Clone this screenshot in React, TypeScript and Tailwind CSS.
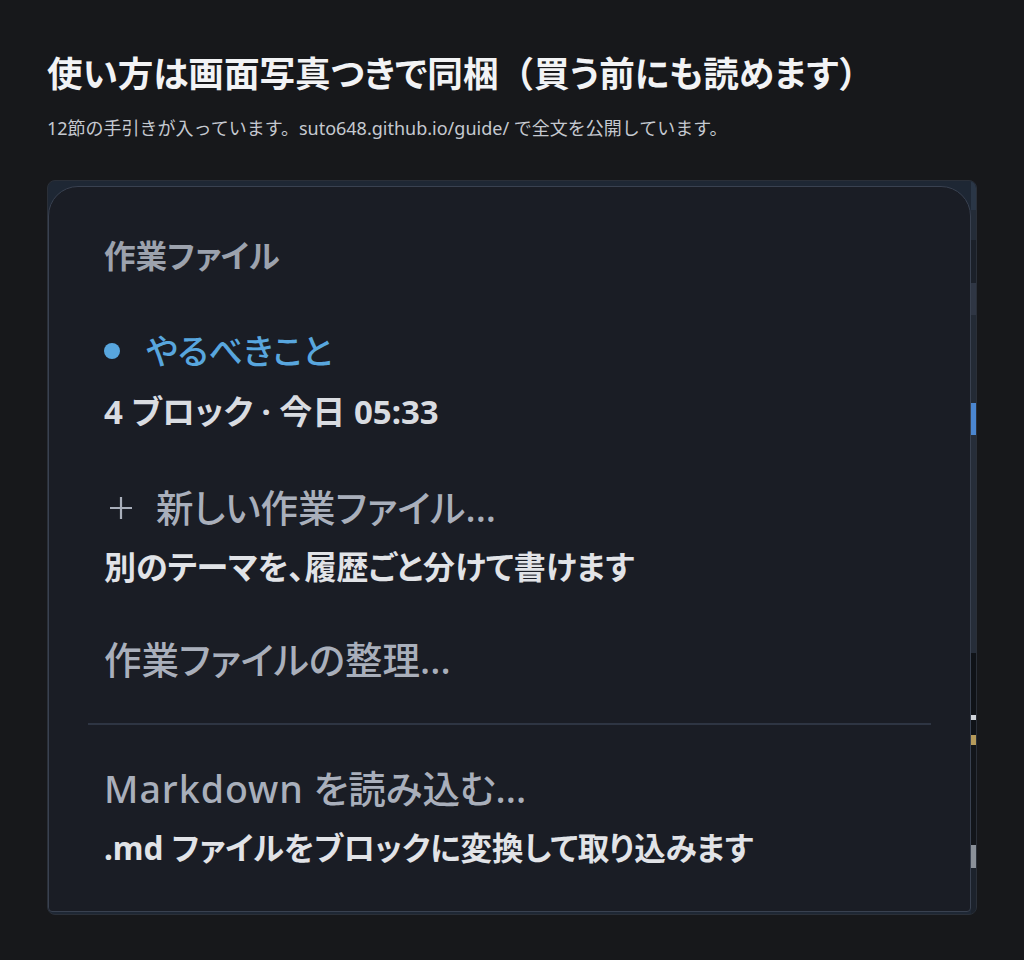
const stripSegments: { h: number; color: string }[] = [
  { h: 29, color: "bg-[#2a3646]" },
  { h: 30, color: "bg-[#242c38]" },
  { h: 43, color: "bg-[#1b2029]" },
  { h: 32, color: "bg-[#2f3644]" },
  { h: 88, color: "bg-[#232a35]" },
  { h: 32, color: "bg-[#4b86d0]" },
  { h: 218, color: "bg-[#262d39]" },
  { h: 62, color: "bg-[#0f1217]" },
  { h: 5, color: "bg-[#d0d4da]" },
  { h: 15, color: "bg-[#0f1217]" },
  { h: 10, color: "bg-[#b59a5a]" },
  { h: 100, color: "bg-[#12151a]" },
  { h: 23, color: "bg-[#8a9099]" },
];

function MenuItem({
  title,
  desc,
  lead,
  className = "",
  descClass = "text-[32px]",
}: {
  title: React.ReactNode;
  desc?: string;
  lead?: React.ReactNode;
  className?: string;
  descClass?: string;
}) {
  return (
    <div className={className}>
      <div className="flex items-center h-[44px] text-[37.5px] leading-[44px] font-medium text-[#a9afbb]">
        {lead}
        <span>{title}</span>
      </div>
      {desc && (
        <div className={`mt-[17px] h-[40px] leading-[40px] font-bold text-[#e1e3e7] ${descClass}`}>
          {desc}
        </div>
      )}
    </div>
  );
}

export default function App() {
  return (
    <div className="min-h-[960px] bg-[#17181b] px-[47px] pt-[49px] font-['Noto_Sans','Noto_Sans_CJK_JP',sans-serif] [font-feature-settings:'palt']">
      <h1 className="text-[35.6px] leading-[48px] font-bold text-[#f2f3f5]">
        使い方は画面写真つきで同梱
        <span className="[font-feature-settings:normal]">（</span>
        買う前にも読めます
        <span className="[font-feature-settings:normal]">）</span>
      </h1>
      <p className="mt-[18px] text-[18px] leading-[26px] text-[#c5c9d0] [font-feature-settings:normal]">
        12節の手引きが入っています。suto648.github.io/guide/ で全文を公開しています。
      </p>

      {/* screenshot frame */}
      <div className="mt-[39px] flex rounded-[8px] border border-[#2a2f38] bg-[#1e2734] overflow-hidden">
        <div className="flex-1 pt-[5px] pb-[2px]">
          <div className="rounded-t-[30px] rounded-b-[4px] border-[1.5px] border-[#394150] bg-[#1a1d25] pt-[49px] pb-[43px]">
            <div className="pl-[55px] h-[40px] text-[31.6px] leading-[40px] font-semibold text-[#9ca2ad]">
              作業ファイル
            </div>

            <div className="pl-[55px] mt-[53px]">
              <div className="flex items-center h-[44px] text-[34px] leading-[44px] font-medium text-[#58a6de]">
                <span className="w-[16px] h-[16px] rounded-full bg-[#58a6de] mr-[26px]" />
                <span>やるべきこと</span>
              </div>
              <div className="mt-[19px] h-[40px] text-[33px] leading-[40px] font-bold text-[#d9dce1]">
                4 ブロック · 今日 05:33
              </div>
            </div>

            <MenuItem
              className="pl-[55px] mt-[54px]"
              title="新しい作業ファイル..."
              desc="別のテーマを、履歴ごと分けて書けます"
              lead={
                <span className="w-[52px] flex items-center">
                  <svg width="24" height="24" viewBox="0 0 24 24" className="ml-[5px]">
                    <path d="M12 1v22M1 12h22" stroke="#a9afbb" strokeWidth="2.2" fill="none" />
                  </svg>
                </span>
              }
            />

            <MenuItem className="pl-[55px] mt-[51px]" title="作業ファイルの整理..." />

            <div className="mx-[39px] mt-[41px] h-[2px] bg-[#2e3543]" />

            <MenuItem
              className="pl-[55px] mt-[42px]"
              title={
                <>
                  <span className="tracking-[1px]">Markdown</span> を読み込む...
                </>
              }
              desc=".md ファイルをブロックに変換して取り込みます"
              descClass="text-[31.5px]"
            />
          </div>
        </div>

        {/* sliver of the app behind the menu */}
        <div className="w-[5px] flex flex-col bg-[#1c222c]">
          {stripSegments.map((s, i) => (
            <div key={i} className={s.color} style={{ height: s.h }} />
          ))}
        </div>
      </div>
    </div>
  );
}
